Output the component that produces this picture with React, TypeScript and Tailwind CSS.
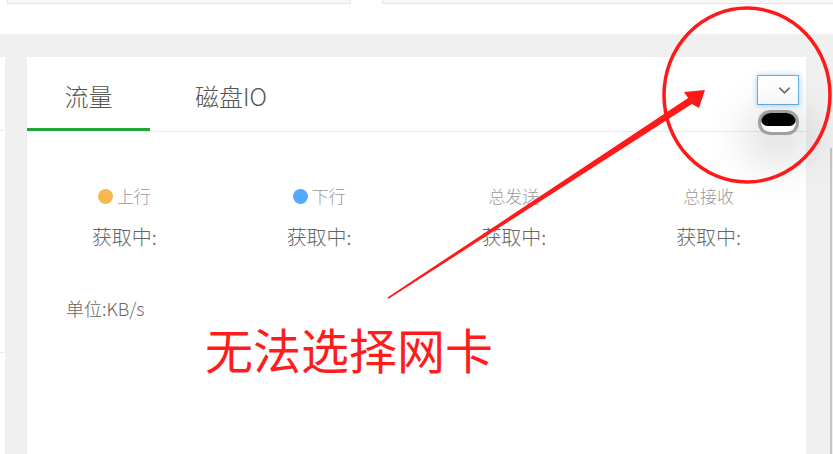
import { ChevronDown } from "lucide-react";

const stats = [
  { label: "上行", dot: "bg-[#f7b851]" },
  { label: "下行", dot: "bg-[#52a9ff]" },
  { label: "总发送", dot: "" },
  { label: "总接收", dot: "" },
];

export default function App() {
  return (
    <div
      className="relative h-[454px] w-[833px] overflow-hidden bg-[#f0f0f0] font-light"
      style={{ fontFamily: '"Noto Sans CJK SC", "Noto Sans", sans-serif' }}
    >
      {/* top cards (bottom edges only) */}
      <div className="flex h-[34px] gap-[31px] bg-white pl-[7px]">
        <div className="h-[4px] w-[344px] border border-t-0 border-[#e6e6e6] bg-[#f7f7f7]" />
        <div className="h-[4px] flex-1 border border-t-0 border-r-0 border-[#e6e6e6] bg-[#f7f7f7]" />
      </div>

      <div className="mt-[23px] flex h-[397px]">
        {/* left neighbour panel edge */}
        <div className="flex w-[5px] flex-col bg-white">
          <div className="h-[74px] border-b border-[#ececf0]" />
          <div className="h-[222px] border-b border-[#ececf0]" />
        </div>

        {/* main panel */}
        <div className="ml-[22px] flex w-[779px] flex-col bg-white">
          <div className="relative flex h-[75px] border-b border-[#e9e9e9]">
            <div className="flex h-[74px] w-[123px] items-center justify-center border-b-[3px] border-[#20a53a] pt-[7px] text-[24px] text-[#555]">
              流量
            </div>
            <div className="ml-[45px] flex h-[74px] items-center pt-[4px] text-[24px] text-[#555]">
              磁盘IO
            </div>
            <div className="absolute left-[730px] top-[18px] flex h-[30px] w-[42px] items-center justify-end border border-[#66afe9] bg-white pr-[4px] shadow-[0_0_6px_rgba(102,175,233,0.6)]">
              <ChevronDown size={19} strokeWidth={1.8} className="text-[#666]" />
            </div>
          </div>

          <div className="grid grid-cols-4 pt-[52px]">
            {stats.map((s) => (
              <div key={s.label} className="flex flex-col items-center">
                <div className="flex h-[24px] items-center gap-[4px] text-[17px] text-[#999]">
                  {s.dot && <span className={`h-[15px] w-[15px] rounded-full ${s.dot}`} />}
                  <span>{s.label}</span>
                </div>
                <div className="mt-[15px] h-[28px] text-[20px] leading-[28px] text-[#666]">获取中:</div>
              </div>
            ))}
          </div>

          <div className="mt-[45px] pl-[39px] text-[18px] leading-[24px] text-[#666]">单位:KB/s</div>
        </div>

        {/* right gutter with scrollbar */}
        <div className="flex flex-1 justify-end pr-[1px] pt-[91px]">
          <div className="h-full w-[2px] bg-[#c4c4c4]" />
        </div>
      </div>

      {/* open (empty) dropdown list */}
      <div className="absolute left-[758px] top-[110px] h-[25px] w-[41px] rounded-[12px] bg-[#a0a0a0] p-[3px] shadow-[0_14px_40px_16px_rgba(0,0,0,0.12)]">
        <div className="h-full overflow-hidden rounded-[10px] bg-white">
          <div className="h-[13px] rounded-full bg-black" />
        </div>
      </div>

      {/* annotation */}
      <svg className="pointer-events-none absolute inset-0" width="833" height="454" viewBox="0 0 833 454">
        <ellipse cx="747" cy="95" rx="83" ry="87" fill="none" stroke="#ff1a1a" strokeWidth="3.5" />
        <polygon
          fill="#ff1a1a"
          points="388.6,298.8 691.9,103.9 699,108 705,90 684,92 688.1,98.1 387.4,297.4"
        />
      </svg>
      <div className="absolute left-[205px] top-[324px] text-[48px] font-normal leading-none text-[#ff1c1c]">无法选择网卡</div>
    </div>
  );
}
